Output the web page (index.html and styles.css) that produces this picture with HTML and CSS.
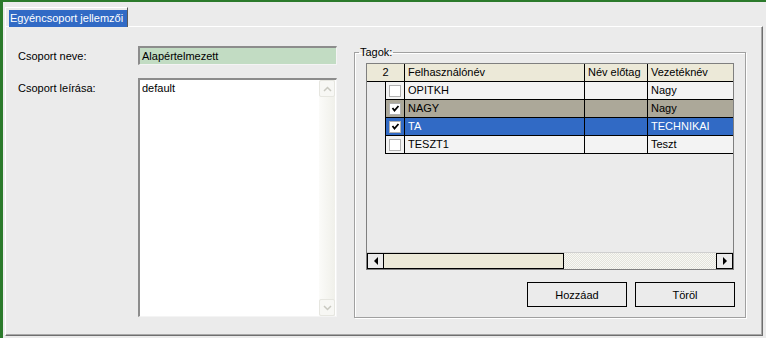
FILE: index.html
```html
<!DOCTYPE html>
<html lang="hu">
<head>
  <meta charset="UTF-8">
  <title>Egyéncsoport jellemzői</title>
  <link rel="stylesheet" href="styles.css">
</head>
<body>
  <div class="window">
    <div class="tabs">
      <div class="tab"><span class="tab-label">Egyéncsoport jellemzői</span></div>
    </div>
    <div class="page">
      <div class="form">
        <div class="field-label">Csoport neve:</div>
        <div class="input">Alapértelmezett</div>
        <div class="field-label">Csoport leírása:</div>
        <div class="textarea">
          <div class="textarea-text">default</div>
          <div class="vscroll">
            <span class="vbtn vbtn-up"><svg width="9" height="6" viewBox="0 0 9 6"><path d="M1 5 L4.5 1.5 L8 5" fill="none" stroke="#c9c9c0" stroke-width="1.5"/></svg></span>
            <span class="vtrack"></span>
            <span class="vbtn vbtn-down"><svg width="9" height="6" viewBox="0 0 9 6"><path d="M1 1 L4.5 4.5 L8 1" fill="none" stroke="#c9c9c0" stroke-width="1.5"/></svg></span>
          </div>
        </div>
      </div>

      <fieldset class="group">
        <legend>Tagok:</legend>
        <div class="grid">
          <div class="row row-head">
            <div class="cell cell-count">2</div>
            <div class="cell">Felhasználónév</div>
            <div class="cell">Név előtag</div>
            <div class="cell cell-last">Vezetéknév</div>
          </div>
          <div class="row">
            <div class="cell cell-ind"></div>
            <div class="cell cell-check"><span class="checkbox"></span></div>
            <div class="cell">OPITKH</div>
            <div class="cell"></div>
            <div class="cell cell-last">Nagy</div>
          </div>
          <div class="row row-marked">
            <div class="cell cell-ind"></div>
            <div class="cell cell-check"><span class="checkbox"><svg width="9" height="9" viewBox="0 0 9 9"><path d="M1.5 4 L3.5 6.5 L7.5 2" fill="none" stroke="#000" stroke-width="1.8"/></svg></span></div>
            <div class="cell">NAGY</div>
            <div class="cell"></div>
            <div class="cell cell-last">Nagy</div>
          </div>
          <div class="row row-selected">
            <div class="cell cell-ind"></div>
            <div class="cell cell-check"><span class="checkbox"><svg width="9" height="9" viewBox="0 0 9 9"><path d="M1.5 4 L3.5 6.5 L7.5 2" fill="none" stroke="#000" stroke-width="1.8"/></svg></span></div>
            <div class="cell">TA</div>
            <div class="cell"></div>
            <div class="cell cell-last">TECHNIKAI</div>
          </div>
          <div class="row">
            <div class="cell cell-ind"></div>
            <div class="cell cell-check"><span class="checkbox"></span></div>
            <div class="cell">TESZT1</div>
            <div class="cell"></div>
            <div class="cell cell-last">Teszt</div>
          </div>
          <div class="grid-empty"></div>
          <div class="hscroll">
            <span class="hbtn hbtn-left"></span>
            <span class="hthumb"></span>
            <span class="htrack"></span>
            <span class="hbtn hbtn-right"></span>
          </div>
        </div>
        <div class="buttons">
          <button class="btn">Hozzáad</button>
          <button class="btn">Töröl</button>
        </div>
      </fieldset>
    </div>
  </div>
</body>
</html>
```

FILE: styles.css
```css
* { box-sizing: border-box; }
html, body {
  margin: 0;
  padding: 0;
}
body {
  background: #ebebeb;
  font-family: 'Liberation Sans', Arial, sans-serif;
  font-size: 11px;
  color: #000;
  width: 766px;
  height: 338px;
  overflow: hidden;
}
.window {
  height: 338px;
  border-left: 3px solid #2b7a2b;
  border-top: 2px solid #2b7a2b;
}
.tabs {
  height: 24px;
  display: flex;
  align-items: flex-start;
}
.tab {
  position: relative;
  z-index: 1;
  margin: 5px 0 0 2px;
  height: 20px;
  border-top: 1px solid #fff;
  border-left: 1px solid #fff;
  border-right: 1px solid #5a5a5a;
  padding: 2px 0 0 3px;
}
.tab-label {
  display: block;
  width: 118px;
  height: 17px;
  line-height: 16px;
  padding-left: 1px;
  background: #316ac5;
  color: #fff;
  white-space: nowrap;
}
.page {
  margin-left: 2px;
  width: 758px;
  height: 310px;
  border-top: 1px solid #fff;
  border-left: 1px solid #fff;
  border-right: 1px solid #6e6e6e;
  border-bottom: 1px solid #6e6e6e;
  box-shadow: inset -1px -1px 0 #a8a8a8;
  padding: 19px 0 0 12px;
  display: flex;
  align-items: flex-start;
  gap: 17px;
}
.form {
  display: grid;
  grid-template-columns: 120px 199px;
  grid-template-rows: 19px 239px;
  row-gap: 13px;
}
.field-label {
  padding-top: 4px;
  line-height: 13px;
}
.input {
  background: #c2dcc3;
  border-style: solid;
  border-width: 2px 1px 1px 2px;
  border-color: #8c8c8c #f4f4f4 #f4f4f4 #8c8c8c;
  padding: 0 0 0 2px;
  line-height: 16px;
}
.textarea {
  background: #fff;
  border-style: solid;
  border-width: 2px 1px 1px 2px;
  border-color: #8c8c8c #f4f4f4 #f4f4f4 #8c8c8c;
  display: flex;
}
.textarea-text {
  flex: 1;
  padding: 2px 0 0 2px;
  line-height: 13px;
}
.vscroll {
  width: 16px;
  margin-right: 1px;
  display: flex;
  flex-direction: column;
  background: linear-gradient(90deg, #fbfbf9, #f0f0ea);
}
.vbtn {
  height: 17px;
  border: 1px solid #e6e6e0;
  border-radius: 2px;
  background: #f7f7f4;
  display: flex;
  align-items: center;
  justify-content: center;
}
.vtrack { flex: 1; }
.group {
  margin: 0;
  width: 392px;
  height: 272px;
  padding: 4px 11px 10px 11px;
  border: 1px solid #a0a0a0;
  box-shadow: inset 1px 1px 0 #fff, 1px 1px 0 #fff;
}
.group legend {
  margin-left: -7px;
  padding: 0 1px;
  line-height: 13px;
}
.grid {
  height: 207px;
  border: 1px solid #7f7f7f;
  display: flex;
  flex-direction: column;
  background: #ebebeb;
}
.row {
  display: grid;
  grid-template-columns: 19px 19px 180px 63px 1fr;
  height: 18px;
  background: #f3f3f3;
}
.cell {
  border-right: 1px solid #000;
  border-bottom: 1px solid #000;
  line-height: 17px;
  padding-left: 3px;
  white-space: nowrap;
  overflow: hidden;
}
.cell-last { border-right: none; }
.row-head { background: #ece9d8; }
.cell-count {
  grid-column: span 2;
  text-align: center;
  padding-left: 0;
}
.cell-ind {
  background: #ebebeb;
  border-bottom: none;
}
.cell-check {
  padding: 0;
  display: flex;
  align-items: center;
  justify-content: center;
}
.checkbox {
  width: 12px;
  height: 12px;
  border: 1px solid #b0b0b0;
  background: #fff;
  display: flex;
  align-items: center;
  justify-content: center;
}
.row-marked { background: #aca899; }
.row-selected {
  background: #316ac5;
  color: #fff;
}
.grid-empty { flex: 1; }
.hscroll {
  height: 17px;
  display: flex;
  border-top: 1px solid #cfcfcf;
}
.hbtn {
  width: 17px;
  border: 1px solid #000;
  background: #ebebeb;
  display: flex;
  align-items: center;
  justify-content: center;
}
.hbtn::before {
  content: "";
  width: 0;
  height: 0;
  border-top: 4px solid transparent;
  border-bottom: 4px solid transparent;
}
.hbtn-left::before { border-right: 4px solid #000; }
.hbtn-right::before { border-left: 4px solid #000; }
.hthumb {
  width: 180px;
  border: 1px solid #000;
  border-left: none;
  background: #ece9d8;
}
.htrack {
  flex: 1;
  background: repeating-conic-gradient(#f8f8f4 0 25%, #e4e4dc 0 50%) 0 0 / 2px 2px;
}
.buttons {
  margin-top: 12px;
  display: flex;
  justify-content: flex-end;
  gap: 8px;
  margin-right: -1px;
}
.btn {
  width: 100px;
  height: 25px;
  border: 1px solid #000;
  background: #ebebeb;
  font-family: 'Liberation Sans', Arial, sans-serif;
  font-size: 11px;
  color: #000;
  padding: 0;
}
```
